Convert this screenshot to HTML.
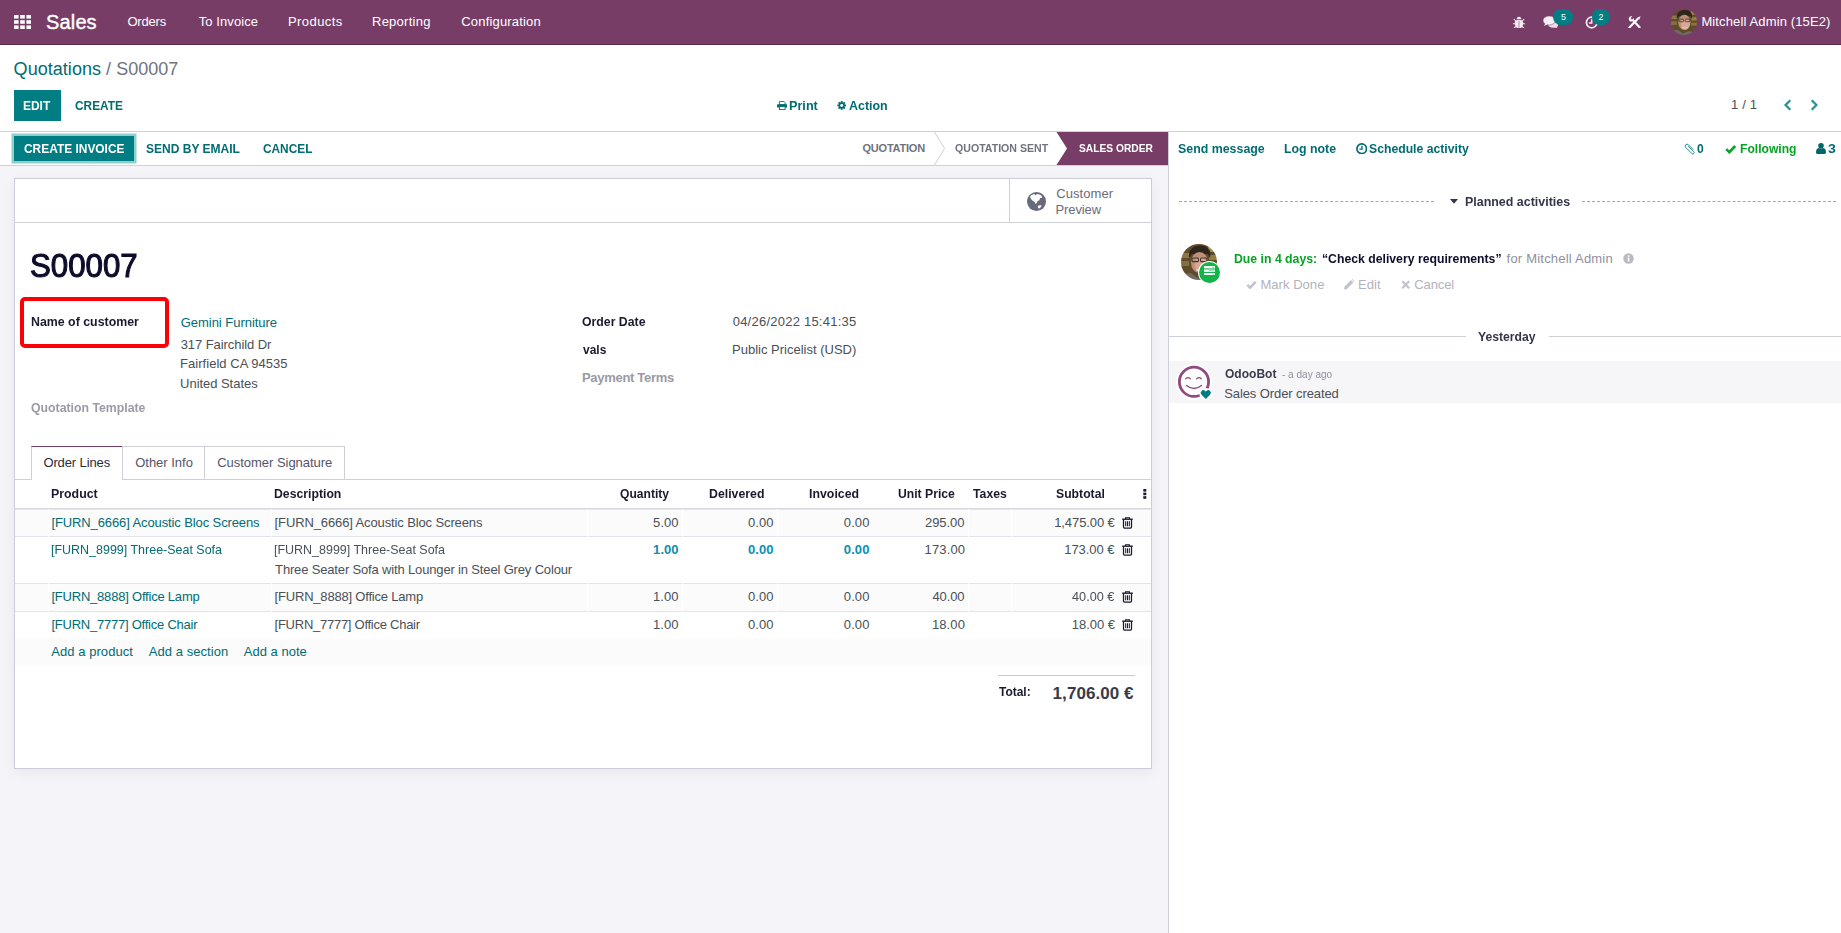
<!DOCTYPE html>
<html lang="en">
<head>
<meta charset="utf-8">
<title>S00007 - Odoo</title>
<style>
*{box-sizing:border-box;margin:0;padding:0}
html,body{width:1841px;height:933px;overflow:hidden;background:#fff}
body{font-family:"Liberation Sans",sans-serif;font-size:13px;color:#495057;position:relative}
.abs{position:absolute;white-space:nowrap}
.t{position:absolute;white-space:nowrap;line-height:16px;height:16px}
.b{font-weight:bold}
.teal{color:#016c72}
.dark{color:#1a1a2e}
.muted{color:#9a9ba6}
/* navbar */
#nav{position:absolute;left:0;top:0;width:1841px;height:45px;background:#783d67;border-bottom:1px solid #5b2a4d;color:#fff}
.w{color:#fff}
/* control panel */
#cp{position:absolute;left:0;top:45px;width:1841px;height:87px;background:#fff;border-bottom:1px solid #cfcfd8}
/* left form area */
#left{position:absolute;left:0;top:132px;width:1168px;height:801px;background:#f5f5f9}
#status{position:absolute;left:0;top:0;width:1168px;height:34px;background:#fff;border-bottom:1px solid #cdd0d8}
#sheet{position:absolute;left:14px;top:46px;width:1138px;height:591px;background:#fff;border:1px solid #cdcdd8;box-shadow:0 4px 14px rgba(0,0,0,.06)}
/* chatter */
#chat{position:absolute;left:1168px;top:132px;width:673px;height:801px;background:#fff;border-left:1px solid #cdd0d8}
.btn{position:absolute;color:#fff;background:#017e84;font-weight:bold;text-align:center;white-space:nowrap}
</style>
</head>
<body>
<!-- backgrounds -->
<div id="nav"></div>
<div id="cp"></div>
<div id="left"><div id="status"></div><div id="sheet"></div></div>
<div id="chat"></div>

<!-- NAVBAR -->
<svg class="abs" style="left:14px;top:15px" width="17" height="14" viewBox="0 0 17 14" fill="#fff"><rect x="0" y="0" width="4.6" height="3.6"/><rect x="6.2" y="0" width="4.6" height="3.6"/><rect x="12.4" y="0" width="4.6" height="3.6"/><rect x="0" y="5.2" width="4.6" height="3.6"/><rect x="6.2" y="5.2" width="4.6" height="3.6"/><rect x="12.4" y="5.2" width="4.6" height="3.6"/><rect x="0" y="10.4" width="4.6" height="3.6"/><rect x="6.2" y="10.4" width="4.6" height="3.6"/><rect x="12.4" y="10.4" width="4.6" height="3.6"/></svg>
<div class="t w" id="n_sales" style="left:46.1px;top:9px;font-size:20px;line-height:26px;height:26px;letter-spacing:0.125px;-webkit-text-stroke:0.4px #fff">Sales</div>
<div class="t w" id="n_orders" style="left:127.4px;top:14px;letter-spacing:-0.180px">Orders</div>
<div class="t w" id="n_toinv" style="left:198.7px;top:14px;letter-spacing:0.087px">To Invoice</div>
<div class="t w" id="n_prod" style="left:288.0px;top:14px;letter-spacing:0.429px">Products</div>
<div class="t w" id="n_rep" style="left:372.0px;top:14px;letter-spacing:0.250px">Reporting</div>
<div class="t w" id="n_conf" style="left:461.3px;top:14px;letter-spacing:0.177px">Configuration</div>
<div class="t w" id="n_user" style="left:1701.4px;top:14px;letter-spacing:0.130px">Mitchell Admin (15E2)</div>


<!-- NAV ICONS -->
<svg class="abs" style="left:1513px;top:15.5px" width="12" height="12.5" viewBox="0 0 12 12.5"><g stroke="#f6eef4" stroke-width="1.100"><path d="M0.800 3L2.600 5M11.200 3L9.400 5M0 7.800H2.200M12 7.800H9.800M0.900 12.300L2.900 10.300M11.100 12.300L9.100 10.300"/></g><path d="M3.700 3.300a2.300 2.600 0 0 1 4.600 0z" fill="#f6eef4"/><path d="M1.900 6.600a2.600 2.600 0 0 1 2.600-2.600h3a2.600 2.600 0 0 1 2.600 2.600v1.500a4.100 4.100 0 0 1-8.200 0z" fill="#f6eef4"/><rect x="5.550" y="4.600" width="0.900" height="7.200" fill="#b07a9c"/></svg>
<svg class="abs" style="left:1542.5px;top:15.800px" width="15.500" height="12.400" viewBox="0 0 15.500 12.400"><path d="M10.200 5.300c2.900 0 5.200 1.500 5.200 3.300 0 1-.6 1.800-1.600 2.400.2.600.6 1.100 1.100 1.400-1.100 0-2.100-.3-2.900-.8-.6.100-1.200.2-1.800.2-2.900 0-5.200-1.400-5.200-3.200s2.300-3.300 5.200-3.300z" fill="#eadce5"/><ellipse cx="6.200" cy="4.500" rx="6.200" ry="4.500" fill="#f6eef4" stroke="#783d67" stroke-width="0.500"/><path d="M2.300 7.300c-.2 1-.7 1.800-1.500 2.300 1.400 0 2.700-.5 3.600-1.300z" fill="#f6eef4"/></svg>
<div class="abs" style="left:1553px;top:9px;width:20px;height:16px;border-radius:8px;background:#017e84"></div>
<div class="t w" id="bd5" style="left:1561px;top:9px;font-size:9px;line-height:16px">5</div>
<svg class="abs" style="left:1585px;top:15.500px" width="13.500" height="13" viewBox="0 0 13.500 13"><circle cx="6.700" cy="6.500" r="5.300" fill="none" stroke="#f6eef4" stroke-width="1.700"/><path d="M6.700 3.300V7H3.900" fill="none" stroke="#f6eef4" stroke-width="1.500"/></svg>
<div class="abs" style="left:1592px;top:9px;width:18px;height:16px;border-radius:8px;background:#017e84"></div>
<div class="t w" id="bd2" style="left:1598.5px;top:8.5px;font-size:9px;line-height:16px">2</div>
<svg class="abs" style="left:1627.500px;top:15.500px" width="13" height="12.500" viewBox="0 0 13 12.500"><path d="M1.400 11.400L9.600 3" stroke="#fff" stroke-width="2.200" stroke-linecap="round"/><path d="M9.300 1.400L12.600 0.200 11.400 3.500z" fill="#fff"/><path d="M11.600 11.300L5.200 4.600" stroke="#fff" stroke-width="2.100" stroke-linecap="round"/><path d="M0.800 2.400a2.800 2.800 0 0 1 3.500-2L2.600 2.200l1.400 1.500 1.900-1.600a2.800 2.800 0 0 1-3.400 3.300A2.800 2.800 0 0 1 0.800 2.400z" fill="#fff"/></svg>
<svg class="abs" style="left:1671px;top:9px" width="26" height="26" viewBox="0 0 36 36"><defs><clipPath id="av1"><circle cx="18" cy="18" r="18"/></clipPath><filter id="av1b" x="-10%" y="-10%" width="120%" height="120%"><feGaussianBlur stdDeviation="0.5"/></filter></defs><g clip-path="url(#av1)"><g filter="url(#av1b)"><rect x="-3" y="-3" width="42" height="42" fill="#5f4c2b"/><rect x="-2" y="9" width="11" height="5" fill="#8d7746"/><rect x="-2" y="17" width="10" height="5" fill="#84703f"/><rect x="27" y="3" width="12" height="5" fill="#a08a4a"/><rect x="28" y="11" width="10" height="5" fill="#93803f"/><rect x="28" y="19" width="10" height="4" fill="#8a763c"/><path d="M8 14C7 5 13 1.500 19 1.500S31 5 29 14l-2-4H11z" fill="#2e251d"/><ellipse cx="18.500" cy="18.500" rx="8.500" ry="10.500" fill="#c08f78"/><ellipse cx="20" cy="21" rx="6" ry="7.500" fill="#d8a892"/><rect x="11" y="14" width="6.500" height="3.600" rx="1" fill="none" stroke="#3d3230" stroke-width="1.100"/><rect x="19.500" y="14" width="6.500" height="3.600" rx="1" fill="none" stroke="#3d3230" stroke-width="1.100"/><path d="M15 25.500q4 2.300 7.500 0" stroke="#ecd6cb" stroke-width="1.100" fill="none"/><path d="M-2 38c2-8 8-9.500 12-8.500l7 4.500 8-3.500c5 1 9 3 12 7.500z" fill="#6f6a63"/></g></g></svg>

<!-- CONTROL PANEL -->
<div class="t" id="bc" style="left:13.6px;top:57px;font-size:18px;line-height:24px;height:24px;letter-spacing:0.036px"><span class="teal">Quotations</span><span style="color:#70727f"> / S00007</span></div>
<div class="btn" style="left:14px;top:90px;width:47px;height:31px"></div>
<div class="t w b" id="b_edit" style="left:23.1px;top:98px;transform:scaleX(0.9205);transform-origin:0 50%">EDIT</div>
<div class="t teal b" id="b_create" style="left:74.7px;top:98px;transform:scaleX(0.9138);transform-origin:0 50%">CREATE</div>
<div class="t teal b" id="c_print" style="left:788.9px;top:98px;transform:scaleX(0.9736);transform-origin:0 50%">Print</div>
<div class="t teal b" id="c_action" style="left:849.2px;top:98px;transform:scaleX(0.9557);transform-origin:0 50%">Action</div>
<div class="t" id="pager" style="left:1730.9px;top:97px;letter-spacing:0.225px">1 / 1</div>

<!-- STATUS BAR -->
<div class="btn" style="left:14px;top:136px;width:120px;height:25px;box-shadow:0 0 0 2.5px #8fd0cc"></div>
<div class="t w b" id="b_ci" style="left:24.1px;top:141px;transform:scaleX(0.9174);transform-origin:0 50%">CREATE INVOICE</div>
<div class="t teal b" id="b_sbe" style="left:146.4px;top:141px;transform:scaleX(0.9247);transform-origin:0 50%">SEND BY EMAIL</div>
<div class="t teal b" id="b_cancel" style="left:263.1px;top:141px;transform:scaleX(0.9120);transform-origin:0 50%">CANCEL</div>
<div class="t b" id="s_q" style="left:862.5px;top:140px;font-size:11px;color:#70727f;letter-spacing:-0.216px">QUOTATION</div>
<div class="t b" id="s_qs" style="left:954.9px;top:140px;font-size:11px;color:#70727f;transform:scaleX(0.9629);transform-origin:0 50%">QUOTATION SENT</div>
<div class="t b" id="s_so" style="left:1078.7px;top:140px;font-size:11px;color:#fff;z-index:3;transform:scaleX(0.9298);transform-origin:0 50%">SALES ORDER</div>

<!-- SHEET: button box -->
<div class="abs" style="left:15px;top:222px;width:1136px;height:1px;background:#cdd0d8"></div>
<div class="abs" style="left:1009px;top:179px;width:1px;height:43px;background:#cdd0d8"></div>
<div class="t" id="cpv1" style="left:1056.2px;top:186px;color:#6b6b7b;letter-spacing:0.071px">Customer</div>
<div class="t" id="cpv2" style="left:1055.4px;top:202px;color:#6b6b7b;letter-spacing:-0.080px">Preview</div>

<!-- title + fields -->
<div class="t" id="title" style="left:30.2px;top:245px;font-size:32.5px;line-height:42px;height:42px;color:#0d0d2b;transform:scaleX(0.9610);transform-origin:0 50%;-webkit-text-stroke:1.05px #0d0d2b">S00007</div>
<div class="abs" style="left:20.2px;top:297.2px;width:148.4px;height:50.5px;border:4.5px solid #fb0007;border-radius:5px"></div>
<div class="t b dark" id="l_cust" style="left:31.0px;top:314px;transform:scaleX(0.9511);transform-origin:0 50%">Name of customer</div>
<div class="t teal" id="v_cust" style="left:180.7px;top:315px;letter-spacing:-0.030px">Gemini Furniture</div>
<div class="t" id="v_a1" style="left:180.7px;top:337px;letter-spacing:-0.069px">317 Fairchild Dr</div>
<div class="t" id="v_a2" style="left:180.1px;top:356px;letter-spacing:0.030px">Fairfield CA 94535</div>
<div class="t" id="v_a3" style="left:180.1px;top:376px;letter-spacing:-0.042px">United States</div>
<div class="t b muted" id="l_qt" style="left:31.2px;top:400px;transform:scaleX(0.9448);transform-origin:0 50%">Quotation Template</div>
<div class="t b dark" id="l_od" style="left:581.9px;top:314px;transform:scaleX(0.9449);transform-origin:0 50%">Order Date</div>
<div class="t" id="v_od" style="left:732.7px;top:314px;letter-spacing:0.234px">04/26/2022 15:41:35</div>
<div class="t b dark" id="l_vals" style="left:583.1px;top:342px;transform:scaleX(0.9207);transform-origin:0 50%">vals</div>
<div class="t" id="v_pl" style="left:732.1px;top:342px">Public Pricelist (USD)</div>
<div class="t b muted" id="l_pt" style="left:582.0px;top:370px;letter-spacing:-0.308px">Payment Terms</div>

<!-- tabs -->
<div class="abs" style="left:15px;top:478.600px;width:1136px;height:1px;background:#cdd0d8"></div>
<div class="abs" style="left:31px;top:446px;width:92px;height:34px;background:#fff;border:1px solid #cdd0d8;border-top-color:#783d67;border-bottom:0"></div>
<div class="abs" style="left:122px;top:446px;width:83px;height:33.600px;border:1px solid #cdd0d8"></div>
<div class="abs" style="left:204px;top:446px;width:141px;height:33.600px;border:1px solid #cdd0d8"></div>
<div class="t" id="tab1" style="left:43.4px;top:455px;color:#2b2b3a;letter-spacing:-0.110px">Order Lines</div>
<div class="t" id="tab2" style="left:135.2px;top:455px;color:#55556a;letter-spacing:-0.009px">Other Info</div>
<div class="t" id="tab3" style="left:217.2px;top:455px;color:#55556a;letter-spacing:-0.030px">Customer Signature</div>

<!-- TABLE -->
<div class="abs" style="left:15px;top:507.600px;width:1136px;height:2.400px;background:linear-gradient(#cfcfd8,#ececf0)"></div>
<div class="t b dark" id="h0" style="left:51.0px;top:486px;transform:scaleX(0.9516);transform-origin:0 50%">Product</div>
<div class="t b dark" id="h1" style="left:273.6px;top:486px;transform:scaleX(0.9416);transform-origin:0 50%">Description</div>
<div class="t b dark" id="h2" style="left:620.4px;top:486px;transform:scaleX(0.9298);transform-origin:0 50%">Quantity</div>
<div class="t b dark" id="h3" style="left:708.8px;top:486px;transform:scaleX(0.9464);transform-origin:0 50%">Delivered</div>
<div class="t b dark" id="h4" style="left:809.3px;top:486px;transform:scaleX(0.9496);transform-origin:0 50%">Invoiced</div>
<div class="t b dark" id="h5" style="left:897.6px;top:486px;transform:scaleX(0.9365);transform-origin:0 50%">Unit Price</div>
<div class="t b dark" id="h6" style="left:973.1px;top:486px;transform:scaleX(0.9437);transform-origin:0 50%">Taxes</div>
<div class="t b dark" id="h7" style="left:1055.7px;top:486px;transform:scaleX(0.9397);transform-origin:0 50%">Subtotal</div>
<svg class="abs" style="left:1143px;top:489px" width="4" height="10" viewBox="0 0 4 10" fill="#1a1a2e"><rect x="0.3" y="0" width="3" height="2.6"/><rect x="0.3" y="3.6" width="3" height="2.6"/><rect x="0.3" y="7.2" width="3" height="2.6"/></svg>
<div class="abs" style="left:15px;top:510px;width:1136px;height:27px;background:#fbfbfc;border-bottom:1px solid #e2e4ea"></div>
<div class="t teal" id="r0p" style="left:51.4px;top:515px;letter-spacing:-0.109px">[FURN_6666] Acoustic Bloc Screens</div>
<div class="t" id="r0d0" style="left:274.6px;top:515px;letter-spacing:-0.121px">[FURN_6666] Acoustic Bloc Screens</div>
<div class="t" id="r0n0" style="left:653.1px;top:515px;letter-spacing:0.067px">5.00</div>
<div class="t" id="r0n1" style="left:747.9px;top:515px;letter-spacing:0.100px">0.00</div>
<div class="t" id="r0n2" style="left:843.8px;top:515px;letter-spacing:0.101px">0.00</div>
<div class="t" id="r0n3" style="left:925.0px;top:515px;letter-spacing:-0.060px">295.00</div>
<div class="t" id="r0n4" style="left:1054.2px;top:515px;letter-spacing:-0.087px">1,475.00 €</div>
<svg class="abs" style="left:1122px;top:517px" width="11" height="12" viewBox="0 0 11 12"><g fill="none" stroke="#1a1a2e"><path d="M3.600 1.900V0.700H7.400V1.900" stroke-width="1.100"/><path d="M0.200 2.200H10.800" stroke-width="1.400"/><path d="M1.500 2.600V10a1 1 0 0 0 1 1H8.500a1 1 0 0 0 1-1V2.600" stroke-width="1.250"/><path d="M3.700 4.200V9.300M5.500 4.200V9.300M7.300 4.200V9.300" stroke-width="1.050"/></g></svg>
<div class="abs" style="left:15px;top:537px;width:1136px;height:47.400px;background:#fff;border-bottom:1px solid #e2e4ea"></div>
<div class="t teal" id="r1p" style="left:50.9px;top:542px;transform:scaleX(0.9595);transform-origin:0 50%">[FURN_8999] Three-Seat Sofa</div>
<div class="t" id="r1d0" style="left:274.1px;top:542px;transform:scaleX(0.9595);transform-origin:0 50%">[FURN_8999] Three-Seat Sofa</div>
<div class="t" id="r1d1" style="left:275.1px;top:562px;letter-spacing:-0.158px">Three Seater Sofa with Lounger in Steel Grey Colour</div>
<div class="t b" id="r1n0" style="left:653.1px;top:542px;color:#0b8fb0;letter-spacing:0.067px">1.00</div>
<div class="t b" id="r1n1" style="left:747.9px;top:542px;color:#0b8fb0;letter-spacing:0.100px">0.00</div>
<div class="t b" id="r1n2" style="left:843.8px;top:542px;color:#0b8fb0;letter-spacing:0.101px">0.00</div>
<div class="t" id="r1n3" style="left:924.5px;top:542px;letter-spacing:0.160px">173.00</div>
<div class="t" id="r1n4" style="left:1064.3px;top:542px;letter-spacing:-0.071px">173.00 €</div>
<svg class="abs" style="left:1122px;top:544px" width="11" height="12" viewBox="0 0 11 12"><g fill="none" stroke="#1a1a2e"><path d="M3.600 1.900V0.700H7.400V1.900" stroke-width="1.100"/><path d="M0.200 2.200H10.800" stroke-width="1.400"/><path d="M1.500 2.600V10a1 1 0 0 0 1 1H8.500a1 1 0 0 0 1-1V2.600" stroke-width="1.250"/><path d="M3.700 4.200V9.300M5.500 4.200V9.300M7.300 4.200V9.300" stroke-width="1.050"/></g></svg>
<div class="abs" style="left:15px;top:584.400px;width:1136px;height:27.600px;background:#fbfbfc;border-bottom:1px solid #e2e4ea"></div>
<div class="t teal" id="r2p" style="left:51.4px;top:589px;letter-spacing:-0.209px">[FURN_8888] Office Lamp</div>
<div class="t" id="r2d0" style="left:274.6px;top:589px;letter-spacing:-0.196px">[FURN_8888] Office Lamp</div>
<div class="t" id="r2n0" style="left:653.0px;top:589px;letter-spacing:0.067px">1.00</div>
<div class="t" id="r2n1" style="left:747.9px;top:589px;letter-spacing:0.100px">0.00</div>
<div class="t" id="r2n2" style="left:843.8px;top:589px;letter-spacing:0.101px">0.00</div>
<div class="t" id="r2n3" style="left:932.5px;top:589px;letter-spacing:-0.125px">40.00</div>
<div class="t" id="r2n4" style="left:1072.1px;top:589px;transform:scaleX(0.9775);transform-origin:0 50%">40.00 €</div>
<svg class="abs" style="left:1122px;top:591px" width="11" height="12" viewBox="0 0 11 12"><g fill="none" stroke="#1a1a2e"><path d="M3.600 1.900V0.700H7.400V1.900" stroke-width="1.100"/><path d="M0.200 2.200H10.800" stroke-width="1.400"/><path d="M1.500 2.600V10a1 1 0 0 0 1 1H8.500a1 1 0 0 0 1-1V2.600" stroke-width="1.250"/><path d="M3.700 4.200V9.300M5.500 4.200V9.300M7.300 4.200V9.300" stroke-width="1.050"/></g></svg>
<div class="abs" style="left:15px;top:612px;width:1136px;height:27px;background:#fff"></div>
<div class="t teal" id="r3p" style="left:51.4px;top:617px;letter-spacing:-0.232px">[FURN_7777] Office Chair</div>
<div class="t" id="r3d0" style="left:274.6px;top:617px;letter-spacing:-0.261px">[FURN_7777] Office Chair</div>
<div class="t" id="r3n0" style="left:653.0px;top:617px;letter-spacing:0.067px">1.00</div>
<div class="t" id="r3n1" style="left:747.9px;top:617px;letter-spacing:0.100px">0.00</div>
<div class="t" id="r3n2" style="left:843.8px;top:617px;letter-spacing:0.101px">0.00</div>
<div class="t" id="r3n3" style="left:932.0px;top:617px;letter-spacing:0.081px">18.00</div>
<div class="t" id="r3n4" style="left:1071.8px;top:617px;letter-spacing:-0.048px">18.00 €</div>
<svg class="abs" style="left:1122px;top:619px" width="11" height="12" viewBox="0 0 11 12"><g fill="none" stroke="#1a1a2e"><path d="M3.600 1.900V0.700H7.400V1.900" stroke-width="1.100"/><path d="M0.200 2.200H10.800" stroke-width="1.400"/><path d="M1.500 2.600V10a1 1 0 0 0 1 1H8.500a1 1 0 0 0 1-1V2.600" stroke-width="1.250"/><path d="M3.700 4.200V9.300M5.500 4.200V9.300M7.300 4.200V9.300" stroke-width="1.050"/></g></svg>
<div class="abs" style="left:15px;top:638.600px;width:1136px;height:26.400px;background:#fbfbfc"></div>
<div class="t teal" id="add1" style="left:51.3px;top:644px;letter-spacing:0.051px">Add a product</div>
<div class="t teal" id="add2" style="left:148.7px;top:644px;letter-spacing:0.065px">Add a section</div>
<div class="t teal" id="add3" style="left:243.7px;top:644px;letter-spacing:0.021px">Add a note</div>
<div class="abs" style="left:48px;top:509px;width:1px;height:130px;background:#fff;opacity:.9"></div>
<div class="abs" style="left:271px;top:509px;width:1px;height:130px;background:#fff;opacity:.9"></div>
<div class="abs" style="left:587px;top:509px;width:1px;height:130px;background:#fff;opacity:.9"></div>
<div class="abs" style="left:682px;top:509px;width:1px;height:130px;background:#fff;opacity:.9"></div>
<div class="abs" style="left:777px;top:509px;width:1px;height:130px;background:#fff;opacity:.9"></div>
<div class="abs" style="left:968px;top:509px;width:1px;height:130px;background:#fff;opacity:.9"></div>
<div class="abs" style="left:1011px;top:509px;width:1px;height:130px;background:#fff;opacity:.9"></div>
<div class="abs" style="left:998px;top:675px;width:137px;height:1px;background:#c9c9d2"></div>
<div class="t b dark" id="tot_l" style="left:999.1px;top:684px;transform:scaleX(0.9200);transform-origin:0 50%">Total:</div>
<div class="t b" id="tot_v" style="left:1052.6px;top:682px;font-size:17px;line-height:24px;height:24px;color:#383a49;letter-spacing:0.068px">1,706.00 €</div>

<!-- CHATTER -->
<div class="t teal b" id="ch_send" style="left:1178.4px;top:141px;transform:scaleX(0.9527);transform-origin:0 50%">Send message</div>
<div class="t teal b" id="ch_log" style="left:1284.0px;top:141px;transform:scaleX(0.9483);transform-origin:0 50%">Log note</div>
<div class="t teal b" id="ch_sched" style="left:1369.3px;top:141px;transform:scaleX(0.9392);transform-origin:0 50%">Schedule activity</div>
<div class="t teal b" id="ch_att" style="left:1696.8px;top:141px;transform:scaleX(0.9291);transform-origin:0 50%">0</div>
<div class="t b" id="ch_fol" style="left:1740.0px;top:141px;color:#06a325;transform:scaleX(0.9304);transform-origin:0 50%">Following</div>
<div class="t teal b" id="ch_cnt" style="left:1827.8px;top:141px;transform:scaleX(1.0906);transform-origin:0 50%">3</div>
<div class="abs" style="left:1179px;top:201px;width:255px;height:0;border-top:1px dashed #a6a6b2"></div>
<div class="abs" style="left:1582px;top:201px;width:254px;height:0;border-top:1px dashed #a6a6b2"></div>
<svg class="abs" style="left:1450px;top:199px" width="8" height="5" viewBox="0 0 8 5"><path d="M0 0h8L4 4.700z" fill="#35354a"/></svg>
<div class="t b" id="ch_plan" style="left:1464.8px;top:194px;color:#35354a;transform:scaleX(0.9568);transform-origin:0 50%">Planned activities</div>
<div class="t b" id="ch_due" style="left:1233.7px;top:251px;color:#06a325;transform:scaleX(0.9433);transform-origin:0 50%">Due in 4 days:</div>
<div class="t b" id="ch_chk" style="left:1321.6px;top:251px;color:#0d0d2b;transform:scaleX(0.9412);transform-origin:0 50%">“Check delivery requirements”</div>
<div class="t" id="ch_for" style="left:1506.6px;top:251px;color:#8f8f9c;letter-spacing:0.206px">for Mitchell Admin</div>
<div class="t" id="ch_md" style="left:1260.4px;top:277px;color:#b3b3bd;letter-spacing:0.050px">Mark Done</div>
<div class="t" id="ch_ed" style="left:1358.0px;top:277px;color:#b3b3bd;letter-spacing:0.102px">Edit</div>
<div class="t" id="ch_ca" style="left:1414.3px;top:277px;color:#b3b3bd;letter-spacing:-0.120px">Cancel</div>
<div class="abs" style="left:1169px;top:336px;width:672px;height:1px;background:#cdd0d8"></div>
<div class="abs" style="left:1466px;top:328px;width:83px;height:17px;background:#fff"></div>
<div class="t b" id="ch_yes" style="left:1477.9px;top:329px;color:#35354a;transform:scaleX(0.9363);transform-origin:0 50%">Yesterday</div>
<div class="abs" style="left:1169px;top:361px;width:672px;height:42px;background:#f6f6f9"></div>
<div class="t b" id="ch_bot" style="left:1224.7px;top:366px;color:#3a3a4a;transform:scaleX(0.9250);transform-origin:0 50%">OdooBot</div>
<div class="t" id="ch_ago" style="left:1281.5px;top:366px;font-size:11px;color:#8f8f9c;transform:scaleX(0.9113);transform-origin:0 50%">- a day ago</div>
<div class="t" id="ch_msg" style="left:1224.2px;top:386px;letter-spacing:-0.094px">Sales Order created</div>

<!-- CP ICONS -->
<svg class="abs" style="left:776.5px;top:101px" width="10.5" height="9" viewBox="0 0 10.5 9"><path d="M2.4 0.4h4.6l1.100 1.100v2.200H2.400z" fill="none" stroke="#016c72" stroke-width="0.9"/><rect x="0" y="3.300" width="10.500" height="3.300" rx="0.800" fill="#016c72"/><rect x="2.400" y="5.600" width="5.700" height="3" fill="#fff" stroke="#016c72" stroke-width="0.900"/></svg>
<svg class="abs" style="left:837px;top:101px" width="9.400" height="8.800" viewBox="0 0 10 10"><g fill="#016c72"><circle cx="5" cy="5" r="3.500"/><g><rect x="4" y="0" width="2" height="10"/><rect x="4" y="0" width="2" height="10" transform="rotate(45 5 5)"/><rect x="4" y="0" width="2" height="10" transform="rotate(90 5 5)"/><rect x="4" y="0" width="2" height="10" transform="rotate(135 5 5)"/></g></g><circle cx="5" cy="5" r="1.700" fill="#fff"/></svg>
<svg class="abs" style="left:1783px;top:99px" width="9" height="12" viewBox="0 0 9 12"><path d="M7.300 1.300L2.600 6l4.700 4.700" fill="none" stroke="#2a9397" stroke-width="2.300"/></svg>
<svg class="abs" style="left:1810px;top:99px" width="9" height="12" viewBox="0 0 9 12"><path d="M1.700 1.300L6.400 6l-4.700 4.700" fill="none" stroke="#2a9397" stroke-width="2.300"/></svg>
<!-- STATUS ARROWS -->
<svg class="abs" style="left:930px;top:132px;z-index:2" width="240" height="33" viewBox="0 0 240 33"><path d="M4.500 0L14.500 16.500L4.500 33" fill="none" stroke="#cdd0d8" stroke-width="1"/><path d="M126.500 0H238V33H126.500L137 16.500z" fill="#783d67"/></svg>
<!-- GLOBE -->
<svg class="abs" style="left:1026.500px;top:192px" width="19" height="19" viewBox="0 0 19 19"><circle cx="9.500" cy="9.500" r="9.500" fill="#666a7c"/><path d="M3 5L4.300 3 7.300 1.900 8.600 3.200 10 2.100 12.600 2.500 14.800 4 15.200 5.600 13 6.300 12.400 8.200 10.400 9.300 9.800 11 8.600 12 7.600 9.900 5.400 8.600 3.800 6.800z" fill="#fff"/><path d="M10.800 13.800l3.600-.7-.4 2-2 1.700-1-1.400z" fill="#fff"/></svg>
<!-- CHATTER ICONS -->
<svg class="abs" style="left:1355.500px;top:142.800px" width="11.400" height="11.400" viewBox="0 0 11.400 11.400"><circle cx="5.700" cy="5.700" r="4.800" fill="none" stroke="#016c72" stroke-width="1.700"/><path d="M6 2.700v3.500H3.400" fill="none" stroke="#016c72" stroke-width="1.300"/></svg>
<svg class="abs" style="left:1683px;top:142.500px" width="12" height="12" viewBox="0 0 12 12"><path d="M9.700 5.800L5.200 1.300a1.900 1.900 0 0 0-2.700 2.700l6.100 6.100a1.300 1.300 0 0 0 1.900-1.900L5.100 2.800" fill="none" stroke="#2a8f95" stroke-width="1" stroke-linecap="round" transform="translate(.3 .5)"/></svg>
<svg class="abs" style="left:1725px;top:144.300px" width="11.500" height="9.500" viewBox="0 0 11.500 9.500"><path d="M1.300 5.200l3 3L10.200 2" fill="none" stroke="#06a325" stroke-width="2.600"/></svg>
<svg class="abs" style="left:1816px;top:143px" width="10" height="11" viewBox="0 0 10 11"><circle cx="5" cy="2.800" r="2.800" fill="#01666b"/><path d="M0 9.200c0-3 1.500-4.300 3-4.300.5.400 1.200.7 2 .7s1.500-.3 2-.7c1.500 0 3 1.300 3 4.300 0 1-.7 1.800-1.700 1.800H1.700C.7 11 0 10.200 0 9.200z" fill="#01666b"/></svg>
<svg class="abs" style="left:1623px;top:253px" width="11" height="11" viewBox="0 0 11 11"><circle cx="5.500" cy="5.500" r="5.200" fill="#b9b9c3"/><rect x="4.700" y="4.600" width="1.700" height="3.900" fill="#fff"/><rect x="4.700" y="2.300" width="1.700" height="1.500" fill="#fff"/></svg>
<svg class="abs" style="left:1246px;top:280px" width="11" height="9" viewBox="0 0 11 9"><path d="M1.300 4.900l2.800 2.800L9.700 1.800" fill="none" stroke="#c3c3cc" stroke-width="2.500"/></svg>
<svg class="abs" style="left:1344px;top:279px" width="10.500" height="10.500" viewBox="0 0 10.500 10.500"><path d="M0 10.500l.6-3L7 1.100l2.400 2.400L3 9.900zM7.700.5l.5-.5 2.400 2.400-.5.500z" fill="#c3c3cc"/></svg>
<svg class="abs" style="left:1401px;top:280px" width="9.500" height="9.500" viewBox="0 0 9.500 9.500"><path d="M1.300 1.300l6.900 6.900M8.200 1.300L1.300 8.200" stroke="#c3c3cc" stroke-width="2.300"/></svg>
<!-- ACTIVITY AVATAR -->
<svg class="abs" style="left:1181px;top:244px" width="36" height="36" viewBox="0 0 36 36"><defs><clipPath id="av2"><circle cx="18" cy="18" r="18"/></clipPath><filter id="av2b" x="-10%" y="-10%" width="120%" height="120%"><feGaussianBlur stdDeviation="0.5"/></filter></defs><g clip-path="url(#av2)"><g filter="url(#av2b)"><rect x="-3" y="-3" width="42" height="42" fill="#5f4c2b"/><rect x="-2" y="9" width="11" height="5" fill="#8d7746"/><rect x="-2" y="17" width="10" height="5" fill="#84703f"/><rect x="27" y="3" width="12" height="5" fill="#a08a4a"/><rect x="28" y="11" width="10" height="5" fill="#93803f"/><rect x="28" y="19" width="10" height="4" fill="#8a763c"/><path d="M8 14C7 5 13 1.500 19 1.500S31 5 29 14l-2-4H11z" fill="#2e251d"/><ellipse cx="18.500" cy="18.500" rx="8.500" ry="10.500" fill="#c08f78"/><ellipse cx="20" cy="21" rx="6" ry="7.500" fill="#d8a892"/><rect x="11" y="14" width="6.500" height="3.600" rx="1" fill="none" stroke="#3d3230" stroke-width="1.100"/><rect x="19.500" y="14" width="6.500" height="3.600" rx="1" fill="none" stroke="#3d3230" stroke-width="1.100"/><path d="M15 25.500q4 2.300 7.500 0" stroke="#ecd6cb" stroke-width="1.100" fill="none"/><path d="M-2 38c2-8 8-9.500 12-8.500l7 4.500 8-3.500c5 1 9 3 12 7.500z" fill="#6f6a63"/></g></g></svg>
<div class="abs" style="left:1198px;top:261px;width:23px;height:23px;border-radius:50%;background:#fff"></div>
<div class="abs" style="left:1199px;top:262px;width:21px;height:21px;border-radius:50%;background:#12b54a"></div>
<svg class="abs" style="left:1203.500px;top:266px" width="11.500" height="9.400" viewBox="0 0 11.500 9.400" fill="#fff"><rect x="0" y="0" width="11.500" height="2.400"/><rect x="0" y="3.500" width="11.500" height="2.400"/><rect x="0" y="7" width="11.500" height="2.400"/><rect x="8" y=".7" width="2.500" height="1" fill="#7fdc9c"/><rect x="5" y="4.200" width="5.500" height="1" fill="#7fdc9c"/><rect x="9" y="7.700" width="1.500" height="1" fill="#7fdc9c"/></svg>
<!-- ODOOBOT -->
<svg class="abs" style="left:1175.900px;top:364px;z-index:2" width="36" height="36" viewBox="0 0 36 36"><circle cx="18" cy="18" r="18" fill="#fff"/><circle cx="18" cy="17.800" r="14.600" fill="none" stroke="#8f4b7f" stroke-width="2.800"/><path d="M9.700 14.800q2.300-2.200 4.600 0M20.700 14.800q2.300-2.200 4.600 0" fill="none" stroke="#8f4b7f" stroke-width="1.250" stroke-linecap="round"/><path d="M10.500 21.500q7.500 6 15 0" fill="none" stroke="#8f4b7f" stroke-width="1.400" stroke-linecap="round"/><circle cx="29.800" cy="30.300" r="6.300" fill="#fff"/><path d="M29.800 35l-4.300-4.300a2.600 2.600 0 0 1 3.700-3.700l.6.600.6-.6a2.600 2.600 0 0 1 3.700 3.700z" fill="#017e84"/></svg>
</body>
</html>
